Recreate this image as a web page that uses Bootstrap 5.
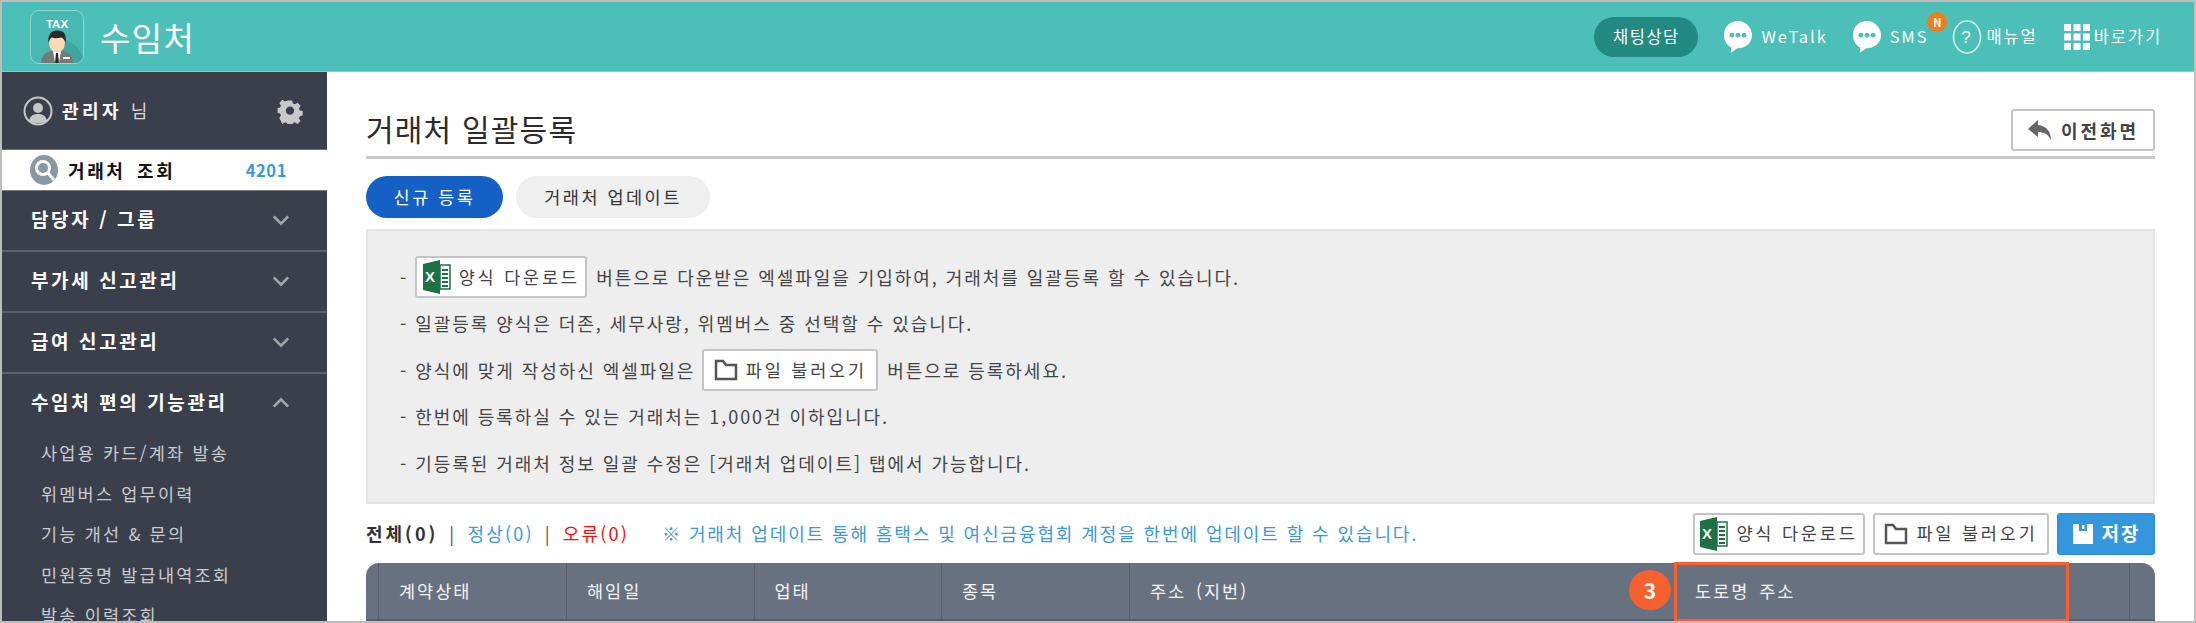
<!DOCTYPE html>
<html lang="ko">
<head>
    <meta charset="UTF-8">
    <meta name="viewport" content="width=device-width, initial-scale=1.0">
    <title>수임처 - 거래처 일괄등록</title>
    <link href="https://cdn.jsdelivr.net/npm/bootstrap@5.3.0/dist/css/bootstrap.min.css" rel="stylesheet">
    <style>
        html, body { height: 100%; overflow: hidden; }
        body { font-family: "Noto Sans CJK KR", "Noto Sans", sans-serif; background: #fff; color: #333; }
        .app-frame { height: 623px; border: 2px solid #bdbdbd; overflow: hidden; }

        /* header */
        .top-bar { height: 70px; background: #4cbfb8; border-bottom: 1px solid #7fd3ce; color: #fff; padding: 0 32px 0 28px; }
        .logo-box { width: 54px; height: 54px; border: 1px solid #8fd8d3; border-radius: 9px; background: #48b9b2; }
        .app-name { font-size: 33px; letter-spacing: 1.4px; margin-left: 16px; line-height: 1; padding-top: 2px; }
        .chat-pill { width: 104px; height: 40px; background: #228a83; border-radius: 20px; font-size: 16.5px; letter-spacing: 1.5px; margin-right: 25px; }
        .top-link { font-size: 16.5px; letter-spacing: 1.9px; color: #fff; text-decoration: none; }
        .new-badge { top: -7px; right: -19px; width: 20px; height: 20px; border-radius: 50%; background: #f07c1c; font-size: 11px; font-weight: 700; letter-spacing: 0; line-height: 20px; text-align: center; }

        /* sidebar */
        .side-panel { width: 325px; background: #3a3f4b; color: #fff; }
        .user-box { height: 78px; padding: 0 24px 0 21px; border-bottom: 1px solid #6c7079; }
        .user-name { font-size: 18px; font-weight: 700; letter-spacing: 3.5px; margin-left: 1px; }
        .user-name span { font-weight: 400; color: #d8d8d8; letter-spacing: 0; }
        .lookup-row { height: 41px; background: #fff; color: #111; padding: 0 40px 0 28px; border-bottom: 1px solid #777; }
        .lookup-row b { font-size: 18px; letter-spacing: 2.6px; word-spacing: 4px; margin-left: 10px; }
        .lookup-count { color: #3b97e0; font-size: 16.5px; font-weight: 700; letter-spacing: .6px; }
        .menu-row { height: 61px; padding: 0 37px 2px 29px; border-bottom: 2px solid #5b606b; font-size: 19px; font-weight: 700; letter-spacing: 2.6px; }
        .menu-row.is-open { border-bottom: 0; height: 59px; }
        .sub-row { height: 40.5px; padding-left: 39px; font-size: 17.5px; letter-spacing: 2.2px; color: #c9cbd0; white-space: nowrap; }

        /* main */
        .main-area { padding: 0 39px; min-width: 0; }
        .title-row { height: 87px; border-bottom: 3px solid #c9c9c9; }
        .page-title { font-size: 30px; font-weight: 400; margin: 0; color: #2b2b2b; letter-spacing: 1.2px; padding-top: 37px; line-height: 1.3; }
        .back-btn { width: 144px; height: 42px; margin-top: 37px; border: 2px solid #c4c4c4; border-radius: 3px; background: #fff; font-size: 18px; font-weight: 700; color: #444; letter-spacing: 3px; padding: 0; }
        .tab-row { gap: 13px; margin: 17px 0 11px; }
        .tab-pill { height: 42px; border-radius: 21px; font-size: 17.5px; letter-spacing: 2.5px; border: 0; padding: 0; }
        .tab-on { width: 137px; background: #1560c4; color: #fff; }
        .tab-off { width: 194px; background: #efefef; color: #333; }
        .info-box { height: 275px; background: #eee; border: 2px solid #e3e3e3; padding: 23px 32px 0; font-size: 18px; color: #444; }
        .info-line { height: 46.5px; letter-spacing: 1.95px; white-space: nowrap; }
        .plain-btn { height: 42px; background: #fff; border: 2px solid #c4c4c4; border-radius: 3px; font-size: 17.5px; color: #444; letter-spacing: 2.8px; padding: 0; }
        .info-line .plain-btn { margin: 0 9px 0 7px; }
        .btn-excel-a { width: 172px; }
        .btn-file-a { width: 176px; }
        .btn-save { width: 98px; height: 42px; background: #3497dd; border: 1px solid #2f8bcc; border-radius: 3px; color: #fff; font-size: 19px; font-weight: 700; letter-spacing: 2px; padding: 0; }
        .count-row { height: 59px; font-size: 18px; letter-spacing: 2.2px; white-space: nowrap; }
        .count-row b { letter-spacing: 3px; }
        .count-sep { color: #555; margin: 0 11px; }
        .count-ok { color: #3b9ad9; }
        .count-err { color: #f01010; }
        .count-note { color: #3b9ad9; margin-left: 33px; letter-spacing: 1.9px; }

        /* table head */
        .grid-head { height: 58px; background: #687180; border-radius: 13px 13px 0 0; color: #f2f3f4; font-size: 17.5px; letter-spacing: 2px; word-spacing: 3px; border-bottom: 2px solid #565e6c; }
        .grid-cell { height: 100%; border-right: 1px solid #565e6c; padding-left: 20px; flex: none; }
        .mark-cell { position: absolute; top: -1px; height: 60px; border: 3px solid #f9602f; }
        .step-badge { position: absolute; top: 7px; width: 42px; height: 40px; border-radius: 50%; background: #f9602f; color: #fff; font-size: 21px; font-weight: 700; letter-spacing: 0; text-align: center; line-height: 40px; }
    </style>
</head>
<body>
<svg width="0" height="0" class="position-absolute">
    <defs>
        <symbol id="ico-bubble" viewBox="0 0 32 36">
            <path d="M16 1C7.500 1 1 7.500 1 16c0 6 3.500 11 8 13.300l-.8 5.700 7-5h.8c8.500 0 15-6.500 15-14S24.500 1 16 1z" fill="#fff"/>
            <circle cx="9.500" cy="16" r="2.600" fill="#4cbfb8"/><circle cx="16" cy="16" r="2.600" fill="#4cbfb8"/><circle cx="22.500" cy="16" r="2.600" fill="#4cbfb8"/>
        </symbol>
        <symbol id="ico-excel" viewBox="0 0 28 34">
            <path d="M0 4 17 0v34L0 30z" fill="#1d7145"/>
            <rect x="17" y="5" width="10" height="24" fill="#fff" stroke="#1d7145" stroke-width="1.500"/>
            <path d="M19 10h6M19 14h6M19 18h6M19 22h6M19 26h6" stroke="#1d7145" stroke-width="1.800"/>
            <text x="8.500" y="22" text-anchor="middle" font-size="15" font-weight="700" fill="#fff" font-family="Liberation Sans">X</text>
        </symbol>
        <symbol id="ico-folder" viewBox="0 0 24 22">
            <path d="M2 20V2h7l3 4h10v14z" fill="none" stroke="#555" stroke-width="2.500"/>
        </symbol>
    </defs>
</svg>

<div class="app-frame d-flex flex-column">
    <!-- 상단바 -->
    <header class="top-bar d-flex align-items-center flex-shrink-0">
        <div class="logo-box d-flex justify-content-center overflow-hidden">
            <svg width="52" height="52" viewBox="0 0 52 52">
                <path d="M26 24 44 34 52 44v8H22z" fill="#3ea69f"/>
                <text x="26" y="17" text-anchor="middle" font-size="11.500" font-weight="700" fill="#fff" font-family="Liberation Sans">TAX</text>
                <path d="M10 52c0-8 5-11 10-12h12c5 1 10 4 10 12z" fill="#77787a"/>
                <path d="M22 40h8l-2 12h-4z" fill="#fff"/><path d="M25 42h2l1 10h-4z" fill="#2a2a2a"/>
                <ellipse cx="26" cy="32" rx="8" ry="9.500" fill="#fbd9b4"/>
                <path d="M17.500 32c-1-8 2.500-12.500 9-12.500s9.500 4.500 8 12.500c-1-3.500-2.500-5-4.500-5.500-3 1-7 1-9 0-1.800 1-2.800 2.500-3.500 5.500z" fill="#2b2b2b"/>
                <rect x="32" y="46" width="7" height="2" fill="#fff"/>
            </svg>
        </div>
        <span class="app-name">수임처</span>
        <div class="ms-auto d-flex align-items-center">
            <div class="chat-pill d-flex align-items-center justify-content-center">채팅상담</div>
            <a class="top-link d-flex align-items-center" href="#" style="margin-right:24px"><svg width="30" height="36" class="me-2"><use href="#ico-bubble"/></svg>WeTalk</a>
            <a class="top-link d-flex align-items-center position-relative" href="#" style="margin-right:24px"><svg width="30" height="36" class="me-2"><use href="#ico-bubble"/></svg>SMS<span class="new-badge position-absolute">N</span></a>
            <a class="top-link d-flex align-items-center" href="#" style="margin-right:26px">
                <svg width="30" height="36" viewBox="0 0 30 36" class="me-1"><ellipse cx="15" cy="18" rx="13.500" ry="16" fill="none" stroke="#cdeeeb" stroke-width="1.600"/><text x="15" y="24" text-anchor="middle" font-size="17" fill="#fff" font-family="Liberation Sans">?</text></svg>매뉴얼</a>
            <a class="top-link d-flex align-items-center" href="#">
                <svg width="26" height="26" viewBox="0 0 26 26" class="me-1" fill="#fff"><rect width="7" height="7"/><rect x="9.500" width="7" height="7"/><rect x="19" width="7" height="7"/><rect y="9.500" width="7" height="7"/><rect x="9.500" y="9.500" width="7" height="7"/><rect x="19" y="9.500" width="7" height="7"/><rect y="19" width="7" height="7"/><rect x="9.500" y="19" width="7" height="7"/><rect x="19" y="19" width="7" height="7"/></svg>바로가기</a>
        </div>
    </header>

    <div class="d-flex flex-grow-1 overflow-hidden">
        <!-- 사이드바 -->
        <aside class="side-panel flex-shrink-0">
            <div class="user-box d-flex align-items-center">
                <svg width="30" height="30" viewBox="0 0 30 30" class="me-2"><circle cx="15" cy="15" r="13.500" fill="#3a3f4b" stroke="#c5c7cb" stroke-width="2"/><circle cx="15" cy="12" r="5" fill="#c5c7cb"/><path d="M6 25c1-6 5-7 9-7s8 1 9 7c-5 3-13 3-18 0z" fill="#c5c7cb"/></svg>
                <span class="user-name">관리자 <span>님</span></span>
                <svg class="ms-auto" width="26" height="26" viewBox="0 0 26 26"><path fill="#c8c9cc" fill-rule="evenodd" d="M10.500 1h5l.8 3.500 2.300 1 3-1.900 3.500 3.500-1.900 3 1 2.300 3.300.8v5l-3.300.8-1 2.300 1.900 3-3.500 3.500-3-1.900-2.300 1-.8 2.900h-5l-.8-2.900-2.300-1-3 1.900L.9 21.100l1.900-3-1-2.300L-1 15v-5l2.800-.8 1-2.300-1.900-3L4.400 .4l3 1.900 2.300-1zM13 8a4.700 4.700 0 1 0 0 9.400A4.700 4.700 0 0 0 13 8z" transform="translate(1.500 1.500) scale(.88)"/></svg>
            </div>
            <div class="lookup-row d-flex align-items-center">
                <svg width="28" height="30" viewBox="0 0 28 30"><ellipse cx="14" cy="15" rx="14" ry="15" fill="#8a97a3"/><circle cx="13" cy="13" r="6.500" fill="none" stroke="#fff" stroke-width="3"/><path d="M18 18l6 7" stroke="#fff" stroke-width="3"/></svg>
                <b>거래처 조회</b>
                <span class="lookup-count ms-auto">4201</span>
            </div>
            <div class="menu-row d-flex align-items-center justify-content-between">담당자 / 그룹
                <svg width="18" height="12" viewBox="0 0 20 12"><path d="M2 2l8 8 8-8" fill="none" stroke="#a3a5a9" stroke-width="3"/></svg></div>
            <div class="menu-row d-flex align-items-center justify-content-between">부가세 신고관리
                <svg width="18" height="12" viewBox="0 0 20 12"><path d="M2 2l8 8 8-8" fill="none" stroke="#a3a5a9" stroke-width="3"/></svg></div>
            <div class="menu-row d-flex align-items-center justify-content-between">급여 신고관리
                <svg width="18" height="12" viewBox="0 0 20 12"><path d="M2 2l8 8 8-8" fill="none" stroke="#a3a5a9" stroke-width="3"/></svg></div>
            <div class="menu-row is-open d-flex align-items-center justify-content-between">수임처 편의 기능관리
                <svg width="18" height="12" viewBox="0 0 20 12"><path d="M2 10l8-8 8 8" fill="none" stroke="#a3a5a9" stroke-width="3"/></svg></div>
            <div class="sub-row d-flex align-items-center">사업용 카드/계좌 발송</div>
            <div class="sub-row d-flex align-items-center">위멤버스 업무이력</div>
            <div class="sub-row d-flex align-items-center">기능 개선 &amp; 문의</div>
            <div class="sub-row d-flex align-items-center">민원증명 발급내역조회</div>
            <div class="sub-row d-flex align-items-center">발송 이력조회</div>
        </aside>

        <!-- 본문 -->
        <main class="main-area flex-grow-1">
            <div class="title-row d-flex justify-content-between align-items-start">
                <h1 class="page-title">거래처 일괄등록</h1>
                <button class="back-btn d-flex align-items-center justify-content-center gap-2" type="button">
                    <svg width="26" height="22" viewBox="0 0 26 22"><path d="M11 1 1 10l10 8v-5c6 0 10 2 13 8 0-8-4-14-13-15z" fill="#666"/></svg>이전화면</button>
            </div>
            <div class="tab-row d-flex">
                <button class="tab-pill tab-on" type="button">신규 등록</button>
                <button class="tab-pill tab-off" type="button">거래처 업데이트</button>
            </div>
            <div class="info-box">
                <div class="info-line d-flex align-items-center">-
                    <button class="plain-btn btn-excel-a d-inline-flex align-items-center justify-content-center gap-2" type="button"><svg width="28" height="34"><use href="#ico-excel"/></svg>양식 다운로드</button>버튼으로 다운받은 엑셀파일을 기입하여, 거래처를 일괄등록 할 수 있습니다.</div>
                <div class="info-line d-flex align-items-center">- 일괄등록 양식은 더존, 세무사랑, 위멤버스 중 선택할 수 있습니다.</div>
                <div class="info-line d-flex align-items-center">- 양식에 맞게 작성하신 엑셀파일은
                    <button class="plain-btn btn-file-a d-inline-flex align-items-center justify-content-center gap-2" type="button"><svg width="24" height="22"><use href="#ico-folder"/></svg>파일 불러오기</button>버튼으로 등록하세요.</div>
                <div class="info-line d-flex align-items-center">- 한번에 등록하실 수 있는 거래처는 1,000건 이하입니다.</div>
                <div class="info-line d-flex align-items-center">- 기등록된 거래처 정보 일괄 수정은 [거래처 업데이트] 탭에서 가능합니다.</div>
            </div>
            <div class="count-row d-flex align-items-center">
                <b>전체(0)</b><span class="count-sep">|</span><span class="count-ok">정상(0)</span><span class="count-sep">|</span><span class="count-err">오류(0)</span>
                <span class="count-note">※ 거래처 업데이트 통해 홈택스 및 여신금융협회 계정을 한번에 업데이트 할 수 있습니다.</span>
                <div class="ms-auto d-flex gap-2">
                    <button class="plain-btn btn-excel-a d-inline-flex align-items-center justify-content-center gap-2" type="button"><svg width="28" height="34"><use href="#ico-excel"/></svg>양식 다운로드</button>
                    <button class="plain-btn btn-file-a d-inline-flex align-items-center justify-content-center gap-2" type="button"><svg width="24" height="22"><use href="#ico-folder"/></svg>파일 불러오기</button>
                    <button class="btn-save d-inline-flex align-items-center justify-content-center gap-2" type="button"><svg width="22" height="22" viewBox="0 0 22 22"><path d="M1 1h20v20H1z" fill="#fff"/><rect x="7" y="1" width="8" height="7" fill="#3497dd"/><rect x="10" y="2" width="2.500" height="4" fill="#fff"/></svg>저장</button>
                </div>
            </div>
            <div class="grid-head d-flex position-relative">
                <div class="grid-cell" style="width:13px;padding:0"></div>
                <div class="grid-cell d-flex align-items-center" style="width:188px">계약상태</div>
                <div class="grid-cell d-flex align-items-center" style="width:187.500px">해임일</div>
                <div class="grid-cell d-flex align-items-center" style="width:187.500px">업태</div>
                <div class="grid-cell d-flex align-items-center" style="width:188px">종목</div>
                <div class="grid-cell d-flex align-items-center" style="width:545px">주소 (지번)</div>
                <div class="grid-cell d-flex align-items-center" style="width:455px">도로명 주소</div>
                <div class="mark-cell" style="left:1308px;width:395px"></div>
                <div class="step-badge" style="left:1263px">3</div>
            </div>
        </main>
    </div>
</div>
<script src="https://cdn.jsdelivr.net/npm/bootstrap@5.3.0/dist/js/bootstrap.bundle.min.js"></script>
</body>
</html>
